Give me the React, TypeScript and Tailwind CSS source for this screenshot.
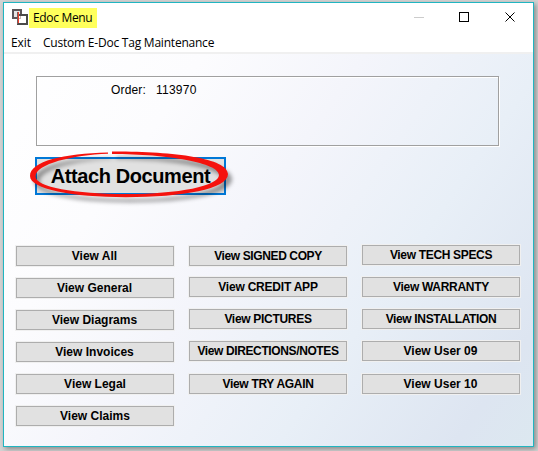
import React from 'react';

interface ViewButtonProps {
  label: string;
  className?: string;
}

const menuItems = [
  { label: 'Exit', className: 'w-8 tracking-[-0.1px]' },
  { label: 'Custom E-Doc Tag Maintenance', className: 'tracking-[-0.22px]' },
];

// Rows are not perfectly even, some of them sit a pixel higher
const columns: ViewButtonProps[][] = [
  [
    { label: 'View All', className: 'mt-px pr-px' },
    { label: 'View General', className: 'mt-3 pr-px' },
    { label: 'View Diagrams', className: 'mt-3 pr-px' },
    { label: 'View Invoices', className: 'mt-3 pr-px' },
    { label: 'View Legal', className: 'mt-3' },
    { label: 'View Claims', className: 'mt-3' },
  ],
  [
    { label: 'View SIGNED COPY', className: 'mt-px tracking-[-0.38px]' },
    { label: 'View CREDIT APP', className: 'mt-[11px] tracking-[-0.22px]' },
    { label: 'View PICTURES', className: 'mt-3 tracking-[-0.3px]' },
    { label: 'View DIRECTIONS/NOTES', className: 'mt-3 tracking-[-0.38px]' },
    { label: 'View TRY AGAIN', className: 'mt-[13px] tracking-[-0.3px]' },
  ],
  [
    { label: 'View TECH SPECS', className: 'tracking-[-0.33px]' },
    { label: 'View WARRANTY', className: 'mt-3 tracking-[-0.3px]' },
    { label: 'View INSTALLATION', className: 'mt-3 tracking-[-0.35px]' },
    { label: 'View User 09', className: 'mt-3 pr-px' },
    { label: 'View User 10', className: 'mt-[13px] pr-px' },
  ],
];

function ViewButton({ label, className = '' }: ViewButtonProps) {
  return (
    <button
      type="button"
      className={`flex h-5 w-[158px] shrink-0 items-center justify-center whitespace-nowrap border border-[#adadad] bg-[#e1e1e1] text-[12px] leading-[18px] font-bold text-black shadow-[0_0_0_1px_#f0f0f0] ${className}`}
    >
      {label}
    </button>
  );
}

function AppIcon() {
  return (
    <svg width="16" height="16" viewBox="0 0 16 16" fill="none" shapeRendering="crispEdges">
      <rect x="1" y="1" width="8" height="8" stroke="#5a5558" strokeWidth="2" fill="#e4e4e4" />
      <rect x="6" y="6" width="9" height="9" stroke="#4a4a4a" strokeWidth="2" fill="#fff" />
      <path d="M5.5 3v12" stroke="#7a5a58" />
      <path d="M6.5 3v11" stroke="#f0402c" />
      <path d="M8.5 7v3M7 9.5h2" stroke="#c4b4b2" />
    </svg>
  );
}

function TitleBar() {
  return (
    <div className="flex h-[30px] items-start bg-white">
      <div className="mt-[6px] ml-2">
        <AppIcon />
      </div>
      <div className="mt-[5px] ml-[1px] h-5 w-[68px] bg-[#ffff5c] pl-1 font-['Open_Sans',sans-serif] text-[12px] leading-[19px] tracking-[-0.33px] whitespace-nowrap text-black">
        Edoc Menu
      </div>
      <svg className="mt-[9px] ml-auto mr-[17px]" width="102" height="11" fill="none" shapeRendering="crispEdges">
        <path d="M0 5.5h10" stroke="#ccc" />
        <rect x="45.5" y="0.5" width="9" height="9" stroke="#000" />
        <path d="M91.5 0.5l9 9M100.5 0.5l-9 9" stroke="#000" shapeRendering="auto" />
      </svg>
    </div>
  );
}

function MenuBar() {
  return (
    <div className="flex h-[19px] bg-white pl-[7px] font-['Open_Sans',sans-serif] text-[12px] leading-[19px] text-black">
      {menuItems.map(item => (
        <span key={item.label} className={`whitespace-nowrap ${item.className}`}>{item.label}</span>
      ))}
    </div>
  );
}

// Hand drawn ring: thick on the right, thin at the top left where the stroke starts
function MarkerRing() {
  return (
    <svg className="pointer-events-none absolute -top-[7px] -left-[7px] overflow-visible drop-shadow-[4px_5px_2px_rgba(0,0,0,0.4)]" width="202" height="50" viewBox="0 0 202 50">
      <path
        fill="#f5120d"
        d="M80 2.4 C36 3.4 2 11 2 26 C2 39 44 47.2 98 47.2 C155 47.2 200 39 200 24 C200 8 145 1.2 84 1.4 L84 4 C140 4 191 13 191 25 C191 36 151 44 98 44 C47 44 7.5 37 7.5 26.5 C7.5 14 45 5 80 3.8 Z"
      />
    </svg>
  );
}

export default function App() {
  return (
    <div className="h-[451px] w-[538px] overflow-hidden bg-[#d3d3d3] pt-[2px] pl-[3px] font-['Liberation_Sans',Arial,sans-serif]">
      <div className="flex h-[445px] w-[531px] flex-col border border-[#20b5c1] shadow-[2px_2px_5px_rgba(0,0,0,0.35)]">
        <TitleBar />
        <MenuBar />
        <div className="flex-1 border-t-2 border-[#f0f0f0] bg-[linear-gradient(125deg,#ffffff_0%,#fcfcfe_25%,#f4f5fb_45%,#e8eff7_68%,#dde5f1_90%,#dce8f0_100%)] pt-[22px]">
          <div className="ml-8 h-[70px] w-[463px] border border-[#a0a0a0] pt-[5px] pl-[74px] text-[12px] leading-4 text-black shadow-[1px_1px_0_#fff,inset_1px_1px_0_#fff]">
            <span className="mr-[10px] tracking-[0.15px]">Order:</span>
            <span className="tracking-[0.25px]">113970</span>
          </div>

          <div className="relative mt-[11px] ml-[31px] h-[38px] w-[191px]">
            <button
              type="button"
              className="flex h-full w-full items-center justify-center whitespace-nowrap border-2 border-[#0078d7] bg-[#e1e1e1] text-[20px] font-bold tracking-[-0.4px] text-black"
            >
              Attach Document
            </button>
            <MarkerRing />
          </div>

          <div className="mt-[50px] ml-3 flex gap-[15px]">
            {columns.map((column, idx) => (
              <div key={idx} className="flex w-[158px] flex-col">
                {column.map(button => (
                  <ViewButton key={button.label} {...button} />
                ))}
              </div>
            ))}
          </div>
        </div>
      </div>
    </div>
  );
}
